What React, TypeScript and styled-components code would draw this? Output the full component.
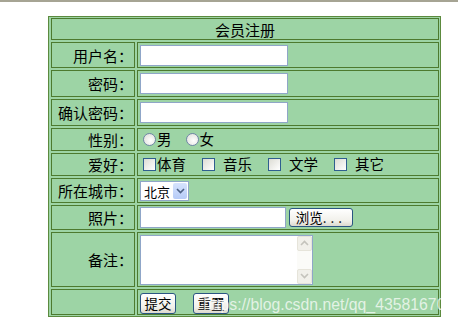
import styled, { createGlobalStyle } from "styled-components";

const GlobalStyle = createGlobalStyle`
  html, body {
    margin: 0;
    padding: 0;
    background: #ffffff;
  }
  body {
    font-family: "Noto Sans CJK SC", "Liberation Sans", sans-serif;
    color: #000;
  }
`;

const Page = styled.div`
  position: relative;
  width: 458px;
  height: 325px;
  box-sizing: border-box;
  border-top: 2px solid #a6a494;
  padding: 14px 0 0 48px;
  overflow: hidden;
`;

const FormTable = styled.div`
  display: grid;
  grid-template-columns: 84px 302px;
  grid-template-rows: 22px 26px 27px 27px 23px 23px 25px 25px 55px 26px;
  gap: 2px;
  width: 393px;
  box-sizing: border-box;
  padding: 1px 1px 1px 2px;
  border: 1px solid #5c8a3e;
  background: #9dd4a5;
`;

const Cell = styled.div<{ $label?: boolean; $wide?: boolean }>`
  display: flex;
  align-items: center;
  justify-content: ${(p) => (p.$label ? "flex-end" : p.$wide ? "center" : "flex-start")};
  grid-column: ${(p) => (p.$wide ? "1 / span 2" : "auto")};
  box-sizing: border-box;
  border: 1px solid #4d7a2f;
  background: #9dd4a5;
  padding: ${(p) => (p.$label ? "0 1px 0 0" : "0 2px")};
  font-size: ${(p) => (p.$label || p.$wide ? "15px" : "14.5px")};
  line-height: 1;
  white-space: nowrap;
`;

const TextBox = styled.input`
  width: ${(p) => (p.size ? `${p.size}px` : "148px")};
  height: 21px;
  box-sizing: border-box;
  margin: 0;
  border: 1px solid #8fa6c8;
  background: #fff;
  outline: none;
`;

const Choice = styled.span<{ $gap?: number }>`
  display: inline-flex;
  align-items: center;
  margin-left: ${(p) => p.$gap ?? 0}px;
`;

const Radio = styled.span`
  display: inline-block;
  width: 11px;
  height: 11px;
  border: 1px solid #6f86a6;
  border-radius: 50%;
  background: radial-gradient(circle at 60% 60%, #ffffff, #dcdcd6);
  margin: 0 1px 0 3px;
`;

const Check = styled.span`
  display: inline-block;
  width: 11px;
  height: 11px;
  border: 1px solid #2f5f8f;
  background: linear-gradient(135deg, #dcdcd4, #ffffff);
  margin: 0 1px 0 3px;
`;

const ChoiceText = styled.span<{ $pad?: number }>`
  margin-left: ${(p) => p.$pad ?? 0}px;
`;

const Select = styled.div`
  display: flex;
  align-items: center;
  width: 49px;
  height: 20px;
  box-sizing: border-box;
  margin-top: 1px;
  border: 1px solid #8fa6c8;
  background: #fff;
  font-size: 13px;
  padding-left: 3px;
`;

const SelectValue = styled.span`
  flex: 1;
`;

const SelectArrow = styled.span`
  display: flex;
  align-items: center;
  justify-content: center;
  width: 14px;
  height: 16px;
  margin-right: 1px;
  border-radius: 2px;
  background: linear-gradient(#d6e3fd, #b6cbf7);
`;

const FileRow = styled.div`
  display: flex;
  align-items: center;
  gap: 3px;
`;

const XpButton = styled.button<{ $w: number; $h?: number }>`
  width: ${(p) => p.$w}px;
  height: ${(p) => p.$h ?? 19}px;
  margin: 0;
  padding: 0;
  box-sizing: border-box;
  border: 1px solid #2a5582;
  border-radius: 3px;
  background: linear-gradient(#ffffff, #f1f0ea 70%, #dcd9ce);
  font-family: "Noto Sans CJK SC", sans-serif;
  font-size: 13.5px;
  line-height: 1;
  color: #000;
`;

const Dots = styled.span`
  letter-spacing: 4px;
`;

const TextArea = styled.div`
  display: flex;
  width: 173px;
  height: 50px;
  box-sizing: border-box;
  border: 1px solid #8fa6c8;
  background: #fff;
`;

const AreaInput = styled.textarea`
  flex: 1;
  border: none;
  resize: none;
  outline: none;
  margin: 0;
  padding: 0;
`;

const ScrollTrack = styled.div`
  display: flex;
  flex-direction: column;
  justify-content: space-between;
  width: 15px;
  background: #fbfbf8;
`;

const ScrollBtn = styled.div`
  display: flex;
  align-items: center;
  justify-content: center;
  height: 15px;
  box-sizing: border-box;
  border: 1px solid #e6e4da;
  border-radius: 2px;
  background: #f1f0ea;
`;

const ButtonRow = styled.div`
  display: flex;
  align-items: center;
  gap: 17px;
  padding-top: 3px;
`;

const Watermark = styled.span`
  position: absolute;
  left: 203px;
  top: 294px;
  font-family: "Liberation Sans", Arial, sans-serif;
  font-size: 15.8px;
  color: rgba(255, 255, 255, 0.72);
  pointer-events: none;
`;

const Chevron = ({ up, color }: { up?: boolean; color: string }) => (
  <svg width="9" height="6" viewBox="0 0 9 6">
    <path
      d={up ? "M1 5 L4.5 1.5 L8 5" : "M1 1 L4.5 4.5 L8 1"}
      fill="none"
      stroke={color}
      strokeWidth="1.6"
    />
  </svg>
);

const hobbies = [
  { text: "体育", gap: 0, pad: 0 },
  { text: "音乐", gap: 13, pad: 7 },
  { text: "文学", gap: 13, pad: 7 },
  { text: "其它", gap: 13, pad: 7 },
];

const App = () => {
  return (
    <Page>
      <GlobalStyle />
      <FormTable>
        <Cell $wide>会员注册</Cell>

        <Cell $label>用户名：</Cell>
        <Cell>
          <TextBox />
        </Cell>

        <Cell $label>密码：</Cell>
        <Cell>
          <TextBox type="password" />
        </Cell>

        <Cell $label>确认密码：</Cell>
        <Cell>
          <TextBox type="password" />
        </Cell>

        <Cell $label>性别：</Cell>
        <Cell>
          <Choice>
            <Radio />
            男
          </Choice>
          <Choice $gap={11}>
            <Radio />
            女
          </Choice>
        </Cell>

        <Cell $label>爱好：</Cell>
        <Cell>
          {hobbies.map((h) => (
            <Choice key={h.text} $gap={h.gap}>
              <Check />
              <ChoiceText $pad={h.pad}>{h.text}</ChoiceText>
            </Choice>
          ))}
        </Cell>

        <Cell $label>所在城市：</Cell>
        <Cell>
          <Select>
            <SelectValue>北京</SelectValue>
            <SelectArrow>
              <Chevron color="#4d6185" />
            </SelectArrow>
          </Select>
        </Cell>

        <Cell $label>照片：</Cell>
        <Cell>
          <FileRow>
            <TextBox size={146} />
            <XpButton $w={64}>
              浏览<Dots>...</Dots>
            </XpButton>
          </FileRow>
        </Cell>

        <Cell $label>备注：</Cell>
        <Cell>
          <TextArea>
            <AreaInput />
            <ScrollTrack>
              <ScrollBtn>
                <Chevron up color="#c4c3bc" />
              </ScrollBtn>
              <ScrollBtn>
                <Chevron color="#c4c3bc" />
              </ScrollBtn>
            </ScrollTrack>
          </TextArea>
        </Cell>

        <Cell $label />
        <Cell>
          <ButtonRow>
            <XpButton $w={36} $h={21}>提交</XpButton>
            <XpButton $w={36} $h={21}>重置</XpButton>
          </ButtonRow>
        </Cell>
      </FormTable>
      <Watermark>https://blog.csdn.net/qq_43581670</Watermark>
    </Page>
  );
};

export default App;
